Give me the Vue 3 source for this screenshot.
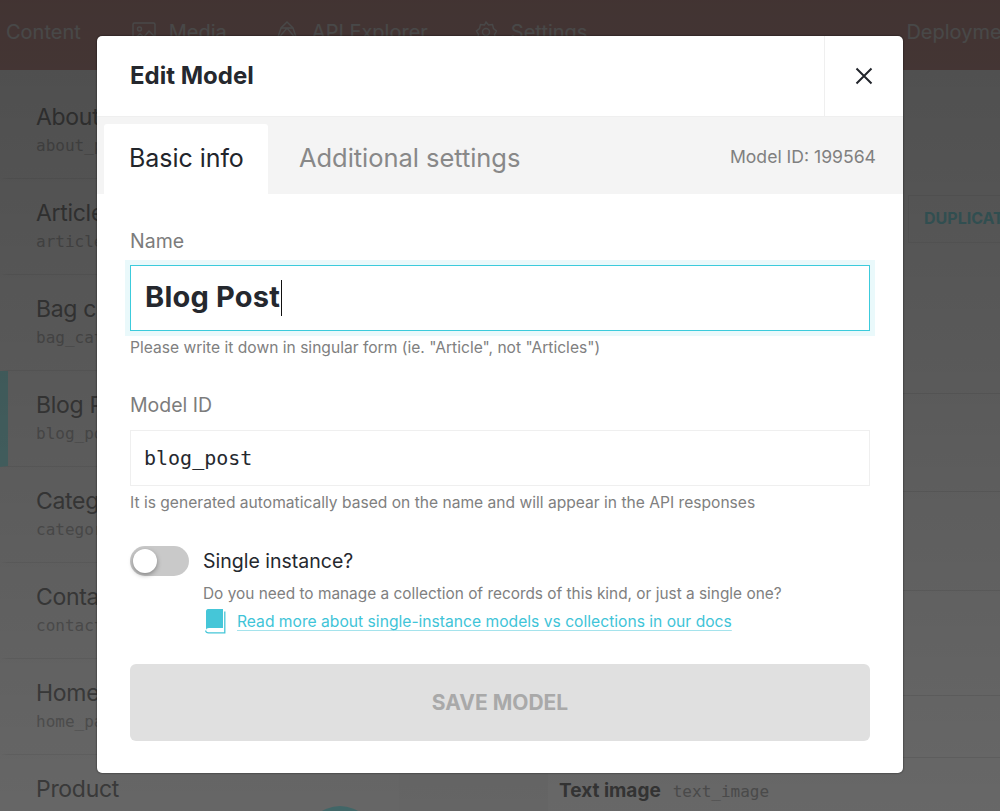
<template>
  <div class="page">
    <header class="topbar">
      <span class="nav-item first">Content</span>
      <span class="nav-item media">
        <svg width="24" height="22" viewBox="0 0 24 22" fill="none" stroke="currentColor" stroke-width="1.4">
          <rect x="1" y="2" width="22" height="18" rx="1.5" />
          <circle cx="7.500" cy="8" r="2" />
          <path d="M2 18l6-5 4 3 5-6 6 6" />
        </svg>
        Media
      </span>
      <span class="nav-item api">
        <svg width="22" height="24" viewBox="0 0 22 24" fill="none" stroke="currentColor" stroke-width="1.4">
          <path d="M11 2l6 6 4 12H1L5 8z" />
          <path d="M5 8h12M1 20l10-12 10 12" />
        </svg>
        API Explorer
      </span>
      <span class="nav-item settings">
        <svg width="22" height="24" viewBox="0 0 22 24" fill="none" stroke="currentColor" stroke-width="1.4">
          <path d="M11 2l2.500 3 4-.5 1 4 3 2.500-2 3.500 1 4-4 1-2 3-3-1.500-3 1.500-2-3-4-1 1-4-2-3.500 3-2.500 1-4 4 .5z" />
          <circle cx="11" cy="12" r="3.500" />
        </svg>
        Settings
      </span>
      <span class="nav-item deploy">Deployment</span>
    </header>

    <main class="workspace">
      <aside class="sidebar">
        <div
          v-for="m in models"
          :key="m.id"
          class="side-row"
          :class="{ selected: m.selected }"
        >
          <div class="side-name">{{ m.name }}</div>
          <div class="side-id">{{ m.id }}</div>
        </div>
      </aside>
      <div class="middle">
        <span class="fab"></span>
      </div>
      <section class="fields">
        <div class="dup-row"><span class="dup">DUPLICATE</span></div>
        <div v-for="n in 5" :key="n" class="field-row" :class="'h' + n"></div>
        <div class="text-image"><b>Text image</b><code>text_image</code></div>
      </section>
    </main>

    <div class="overlay"></div>

    <div class="modal">
      <div class="modal-head">
        <h2>Edit Model</h2>
        <button class="close" aria-label="Close">
          <svg width="18" height="18" viewBox="0 0 18 18" fill="none" stroke="#22252b" stroke-width="2">
            <path d="M1.500 1.500l15 15M16.500 1.500l-15 15" />
          </svg>
        </button>
      </div>

      <div class="tabs">
        <div class="tab active">Basic info</div>
        <div class="tab">Additional settings</div>
        <div class="model-id">Model ID: 199564</div>
      </div>

      <form class="body" @submit.prevent>
        <label class="label">Name</label>
        <div class="input name-input"><span>Blog Post</span><i class="caret"></i></div>
        <p class="hint">Please write it down in singular form (ie. "Article", not "Articles")</p>

        <label class="label second">Model ID</label>
        <div class="input id-input">blog_post</div>
        <p class="hint">It is generated automatically based on the name and will appear in the API responses</p>

        <div class="single">
          <span class="switch"><span class="knob"></span></span>
          <span class="single-label">Single instance?</span>
        </div>
        <p class="help">Do you need to manage a collection of records of this kind, or just a single one?</p>
        <div class="docs">
          <svg width="21" height="25" viewBox="0 0 21 25">
            <path fill="#45c6d8" d="M3 0h15v19H4C2.400 19 1 19.800 1 21.200V2.500C1 1 1.800 0 3 0z" />
            <path fill="none" stroke="#45c6d8" stroke-width="1.300" d="M19.800 2.500V23.800H3.500C1.800 23.800 .7 23 .7 21.500" />
          </svg>
          <a href="#" @click.prevent>Read more about single-instance models vs collections in our docs</a>
        </div>

        <button class="save" disabled>SAVE MODEL</button>
      </form>
    </div>
  </div>
</template>

<script setup>
const models = [
  { name: 'About page', id: 'about_page' },
  { name: 'Article', id: 'article' },
  { name: 'Bag category', id: 'bag_category' },
  { name: 'Blog Post', id: 'blog_post', selected: true },
  { name: 'Category', id: 'category' },
  { name: 'Contact page', id: 'contact_page' },
  { name: 'Home page', id: 'home_page' },
  { name: 'Product', id: 'product' },
]
</script>

<style>
html,
body {
  margin: 0;
  overflow: hidden;
}
</style>

<style scoped>
* {
  box-sizing: border-box;
}

.page {
  position: relative;
  width: 1000px;
  height: 811px;
  overflow: hidden;
  font-family: Inter, "Noto Sans", sans-serif;
  background: #fff;
}

/* page under the dim layer */
.topbar {
  display: flex;
  align-items: center;
  height: 70px;
  padding-bottom: 6px;
  background: #d4a6a2;
  color: #e6e6e6;
  font-size: 20px;
  white-space: nowrap;
}

.nav-item {
  display: flex;
  align-items: center;
  gap: 14px;
}

.first {
  margin-left: 6px;
}

.media {
  margin-left: 51px;
  gap: 13px;
}

.api {
  margin-left: 49px;
}

.settings {
  margin-left: 47px;
}

.deploy {
  margin-left: auto;
  margin-right: -20px;
}

.workspace {
  display: flex;
  height: 741px;
}

.sidebar {
  width: 399px;
  flex: none;
  padding-top: 13px;
  background: #f8f8f8;
}

.side-row {
  height: 96px;
  padding: 20px 0 0 28px;
  border-bottom: 1px solid #e8e8e8;
  border-left: 8px solid transparent;
}

.side-row.selected {
  border-left-color: #b0fafa;
}

.side-name {
  font-size: 23px;
  line-height: 28px;
  letter-spacing: -0.3px;
  color: #8c8c8c;
  white-space: nowrap;
}

.side-id {
  margin-top: 5px;
  font-family: "DejaVu Sans Mono", monospace;
  font-size: 16px;
  color: #bcbcbc;
}

.middle {
  position: relative;
  width: 149px;
  flex: none;
  background: #f5f5f5;
}

.fab {
  position: absolute;
  left: -94px;
  top: 736px;
  width: 70px;
  height: 70px;
  border-radius: 50%;
  background: #9df8fa;
}

.fields {
  flex: 1;
  background: #fbfbfb;
  padding-top: 125px;
}

.dup-row {
  height: 48px;
  padding: 12px 0 0 15px;
  margin: 0 0 150px 360px;
  border: 1px solid #ededed;
  border-right: 0;
}

.dup {
  font-size: 16px;
  font-weight: 700;
  color: #90e8ee;
  white-space: nowrap;
}

.field-row {
  border-bottom: 1px solid #e6e6e6;
}

.h1 {
  height: 0;
}

.h2 {
  height: 98px;
}

.h3 {
  height: 99px;
}

.h4 {
  height: 105px;
}

.h5 {
  height: 62px;
}

.text-image {
  display: flex;
  align-items: baseline;
  gap: 12px;
  padding: 21px 0 0 11px;
  white-space: nowrap;
}

.text-image b {
  font-size: 19px;
  color: #7c7c7c;
}

.text-image code {
  font-family: "DejaVu Sans Mono", monospace;
  font-size: 16px;
  color: #b4b4b4;
}

.overlay {
  position: absolute;
  inset: 0;
  background: linear-gradient(rgba(0, 0, 0, 0.69), rgba(0, 0, 0, 0.59));
}

/* modal */
.modal {
  position: absolute;
  left: 97px;
  top: 36px;
  width: 806px;
  height: 737px;
  border-radius: 5px;
  background: #fff;
  box-shadow: 0 0 2px rgba(0, 0, 0, 0.75);
}

.modal-head {
  display: flex;
  align-items: center;
  justify-content: space-between;
  height: 80px;
  padding-left: 33px;
}

.modal-head h2 {
  margin: 0 0 2px;
  font-size: 24px;
  font-weight: 700;
  color: #25282e;
}

.close {
  display: flex;
  align-items: center;
  justify-content: center;
  width: 79px;
  height: 80px;
  padding: 0;
  border: 0;
  border-left: 1px solid #efefef;
  background: none;
}

.tabs {
  display: flex;
  align-items: flex-end;
  height: 78px;
  padding-left: 7px;
  background: #f4f4f4;
  border-top: 1px solid #efefef;
}

.tab {
  height: 70px;
  padding: 19px 25px 0;
  font-size: 25.500px;
  line-height: 30px;
  letter-spacing: -0.05px;
  color: #888;
  white-space: nowrap;
}

.tab.active {
  width: 164px;
  margin-right: 6px;
  padding-left: 25px;
  border-radius: 3px 3px 0 0;
  background: #fff;
  font-size: 25px;
  color: #22252b;
}

.model-id {
  align-self: center;
  margin-left: auto;
  padding: 2px 27px 0 0;
  font-size: 17.600px;
  color: #808080;
}

.body {
  display: flex;
  flex-direction: column;
  padding: 34px 33px 0;
}

.label {
  font-size: 19.500px;
  line-height: 26px;
  color: #7c7c7c;
}

.label.second {
  margin-top: 34px;
}

.input {
  display: flex;
  align-items: center;
  padding: 0 14px;
  border: 1px solid #efefef;
}

.name-input {
  height: 66px;
  margin-top: 11px;
  padding-bottom: 4px;
  border-color: #3ccbdc;
  box-shadow: 0 0 0 5px #eaf9fb;
  font-size: 29px;
  font-weight: 700;
  letter-spacing: 0.2px;
  color: #25282e;
}

.caret {
  width: 1px;
  height: 36px;
  margin: 4px 0 0 1px;
  background: #111;
}

.id-input {
  height: 56px;
  margin-top: 12px;
  padding-left: 13px;
  font-family: "DejaVu Sans Mono", monospace;
  font-size: 20px;
  color: #25282e;
}

.hint {
  margin: 7px 0 0;
  font-size: 15.600px;
  line-height: 20px;
  color: #808080;
}

.single {
  display: flex;
  align-items: center;
  gap: 14px;
  margin-top: 33px;
}

.switch {
  display: block;
  width: 59px;
  height: 30px;
  padding: 3px;
  border-radius: 15px;
  background: #c9c9c9;
}

.knob {
  display: block;
  width: 24px;
  height: 24px;
  border-radius: 50%;
  background: #fff;
  box-shadow: 0 2px 5px rgba(0, 0, 0, 0.35);
}

.single-label {
  font-size: 19.500px;
  color: #25282e;
}

.help {
  margin: 7px 0 0 73px;
  font-size: 15.400px;
  line-height: 22px;
  color: #808080;
}

.docs {
  display: flex;
  align-items: center;
  gap: 11px;
  margin: 4px 0 0 75px;
}

.docs a {
  font-size: 15.650px;
  color: #3fc4d8;
  text-decoration: underline;
  text-decoration-color: #a5e3ec;
  text-underline-offset: 3px;
}

.save {
  height: 77px;
  margin-top: 30px;
  border: 0;
  border-radius: 6px;
  background: #e0e0e0;
  font-family: inherit;
  font-size: 21px;
  font-weight: 700;
  color: #a9a9a9;
}
</style>
